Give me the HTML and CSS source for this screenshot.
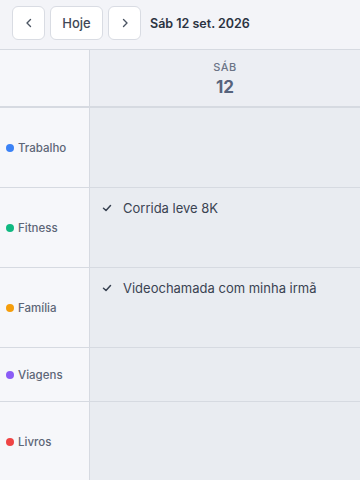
FILE: index.html
```html
<!DOCTYPE html>
<html>
<head>
<meta charset="utf-8">
<title>Calendário</title>
<link rel="stylesheet" href="styles.css">
</head>
<body>
<div class="toolbar">
  <button class="btn icon" aria-label="Anterior">
    <svg width="12" height="12" viewBox="0 0 12 12"><path d="M7.5 2.5 4 6l3.5 3.5" fill="none" stroke="#4b5563" stroke-width="1.4" stroke-linecap="round" stroke-linejoin="round"/></svg>
  </button>
  <button class="btn today">Hoje</button>
  <button class="btn icon" aria-label="Próximo">
    <svg width="12" height="12" viewBox="0 0 12 12"><path d="M4.5 2.5 8 6l-3.5 3.5" fill="none" stroke="#4b5563" stroke-width="1.4" stroke-linecap="round" stroke-linejoin="round"/></svg>
  </button>
  <span class="title">Sáb 12 set. 2026</span>
</div>

<div class="grid">
  <div class="corner"></div>
  <div class="dayhead">
    <span class="dow">SÁB</span>
    <span class="dnum">12</span>
  </div>

  <div class="label"><span class="dot blue"></span>Trabalho</div>
  <div class="cell"></div>

  <div class="label"><span class="dot green"></span>Fitness</div>
  <div class="cell">
    <div class="event"><svg width="10" height="10" viewBox="0 0 10 10"><path d="M1.5 5.2 4 7.5 8.5 2.5" fill="none" stroke="#374151" stroke-width="1.5" stroke-linecap="round" stroke-linejoin="round"/></svg>Corrida leve 8K</div>
  </div>

  <div class="label"><span class="dot orange"></span>Família</div>
  <div class="cell">
    <div class="event"><svg width="10" height="10" viewBox="0 0 10 10"><path d="M1.5 5.2 4 7.5 8.5 2.5" fill="none" stroke="#374151" stroke-width="1.5" stroke-linecap="round" stroke-linejoin="round"/></svg>Videochamada com minha irmã</div>
  </div>

  <div class="label"><span class="dot purple"></span>Viagens</div>
  <div class="cell"></div>

  <div class="label"><span class="dot red"></span>Livros</div>
  <div class="cell"></div>
</div>
</body>
</html>
```

FILE: styles.css
```css
body {
  margin: 0;
  font-family: Inter, "Noto Sans", sans-serif;
  background: #f3f4f8;
  color: #374151;
}

.toolbar {
  display: flex;
  align-items: center;
  gap: 5px;
  height: 50px;
  padding: 0 12px 3px;
  border-bottom: 1px solid #d6dae1;
  box-sizing: border-box;
}
.btn {
  height: 34px;
  background: #fff;
  border: 1px solid #d9dce3;
  border-radius: 6px;
  font-family: inherit;
  font-size: 13px;
  font-weight: 500;
  color: #3f4756;
  display: flex;
  align-items: center;
  justify-content: center;
  padding: 0;
}
.btn.icon { width: 33px; }
.btn.today { width: 53px; }
.title {
  margin-left: 4px;
  font-size: 12.5px;
  font-weight: 600;
  color: #2b3342;
}

.grid {
  display: grid;
  grid-template-columns: 90px 1fr;
  grid-template-rows: 58px 80px 80px 80px 54px 80px;
}
.corner, .label {
  background: #f6f7fa;
  border-right: 1px solid #d6dae1;
}
.corner, .dayhead { border-bottom: 2px solid #d6dae1; }
.dayhead {
  background: #eceef3;
  display: flex;
  flex-direction: column;
  align-items: center;
  padding-top: 10px;
}
.dow {
  font-size: 11px;
  font-weight: 500;
  letter-spacing: 0.5px;
  color: #6b7486;
}
.dnum {
  font-size: 17px;
  font-weight: 700;
  color: #56637c;
  margin-top: 3px;
}

.label {
  display: flex;
  align-items: center;
  gap: 4px;
  padding-left: 6px;
  font-size: 11.5px;
  font-weight: 500;
  color: #5d6677;
  border-bottom: 1px solid #d6dae1;
}
.cell {
  background: #e9ecf1;
  border-bottom: 1px solid #d6dae1;
  padding: 12px 0 0 12px;
}
.dot {
  width: 8px;
  height: 8px;
  border-radius: 50%;
}
.blue { background: #3b82f6; }
.green { background: #10b981; }
.orange { background: #f59e0b; }
.purple { background: #8b5cf6; }
.red { background: #ef4444; }

.event {
  display: flex;
  align-items: center;
  gap: 11px;
  font-size: 13px;
  color: #3a4352;
}
```
